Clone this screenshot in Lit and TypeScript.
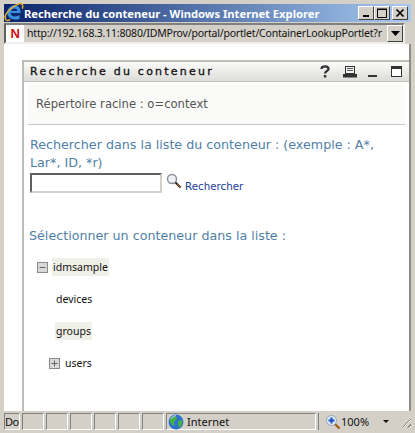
import { LitElement, html, css, svg } from "lit";
import { customElement } from "lit/decorators.js";

const ieLogo = svg`<svg width="20" height="20" viewBox="0 0 18 18"><path d="M3 10 C3 5 7 3 10 3 C13 3 15 6 15 10 L6 10 C6 13 10 14 14 12 L14 15 C9 17 3 15 3 10Z M6.500 8 L12 8 C12 5.500 7.500 5 6.500 8Z" fill="#3a8fe0" fill-rule="evenodd"/><path d="M1 14 C1 10 8 3 14 1.500 C16.500 1 17.500 3 16.500 6" fill="none" stroke="#f0b020" stroke-width="1.300"/><path d="M1.500 13 C0.500 16 2 17.500 5.500 16" fill="none" stroke="#f0b020" stroke-width="1.300"/></svg>`;
const globe = svg`<svg width="16" height="16" viewBox="0 0 16 16"><circle cx="8" cy="8" r="7.500" fill="#2f6fd0"/><path d="M3 3 L8 2 L9 5 L6 8 L7 12 L4 11 L1.500 7Z M10 7 L14.500 6 L14 11 L11 14 L10 10Z" fill="#45b04a"/><path d="M3 5 A6 6 0 0 1 8 1.500" fill="none" stroke="#b8dcf8" stroke-width="1"/></svg>`;
const mag = svg`<svg width="16" height="17" viewBox="0 0 16 17"><circle cx="6" cy="6" r="4.500" fill="#eef2f6" stroke="#8a8f96" stroke-width="1.400"/><path d="M9.500 9.500 L14.500 14.500" stroke="#3a2a1a" stroke-width="2.200"/><path d="M11 11 L14 14" stroke="#c06a20" stroke-width="0.900"/></svg>`;
const zoomIcon = svg`<svg width="16" height="16" viewBox="0 0 16 16"><path d="M10 10 L14.500 14.500" stroke="#a06020" stroke-width="2.400"/><circle cx="6.500" cy="6.500" r="5" fill="#dfe8f4" stroke="#9aa6b6"/><path d="M6.500 3.500 V9.500 M3.500 6.500 H9.500" stroke="#1550c0" stroke-width="2"/></svg>`;
const treeBox = (plus: boolean) => svg`<svg width="11" height="11" viewBox="0 0 11 11"><rect x="0.500" y="0.500" width="10" height="10" fill="#d8d8d8" stroke="#8c8c8c"/><path d="M2.500 5.500 H8.500 ${plus ? "M5.500 2.500 V8.500" : ""}" stroke="#666" stroke-width="1"/></svg>`;

@customElement("app-root")
export class AppRoot extends LitElement {
  static styles = css`
    :host { display: block; width: 415px; height: 433px; overflow: hidden; }
    * { box-sizing: border-box; }
    .win { width: 415px; height: 433px; background: #d4d0c8; padding: 4px 4px 0; display: flex; flex-direction: column; font-family: "DejaVu Sans", sans-serif; }
    .title { height: 18px; flex: none; display: flex; align-items: center; padding: 0 3px 0 0; background: linear-gradient(90deg, #0a246a, #a6caf0); color: #fff; font-family: "Noto Sans", sans-serif; font-weight: bold; font-size: 11.200px; white-space: nowrap; }
    .title span { flex: 1; }
    .logo { display: flex; margin-top: -2px; }
    .wbtns { display: flex; }
    .wbtn { width: 16px; height: 14px; background: #d4d0c8; border: 1px solid; border-color: #fff #404040 #404040 #fff; display: flex; align-items: center; justify-content: center; }
    .wbtn.gap { margin-left: 2px; }
    .addrwrap { height: 22px; flex: none; padding-top: 1px; display: flex; }
    .addr { width: 401px; height: 21px; margin-right: 6px; border: 2px solid; border-color: #808080 #f0eee8 #f0eee8 #606060; background: #fff; display: flex; align-items: center; font-family: "Noto Sans", sans-serif; font-size: 10.500px; letter-spacing: -0.200px; color: #111; white-space: nowrap; overflow: hidden; }
    .addr .n { flex: none; width: 18px; height: 17px; color: #d01010; font-weight: bold; font-size: 13px; text-align: center; line-height: 17px; font-family: "Liberation Sans", sans-serif; }
    .addr .url { flex: 1; min-width: 0; overflow: hidden; background: #d4d0c8; height: 100%; line-height: 16px; padding-left: 3px; }
    .drop { flex: none; width: 16px; height: 100%; background: #d4d0c8; border: 1px solid; border-color: #fff #404040 #404040 #fff; display: flex; align-items: center; justify-content: center; }
    .page { flex: 1; min-height: 0; background: #fff; padding-top: 16px; border-right: 2px solid #8f8c86; display: flex; }
    .portlet { margin-left: 18px; flex: 1; border: 2px solid #bdbdb8; border-right: none; border-bottom: none; }
    .phead { height: 20px; display: flex; align-items: center; padding: 0 6px; background: linear-gradient(#fbfbfa, #dcdcd8); border-bottom: 1px solid #c4c4c0; font-size: 11px; letter-spacing: 2.240px; color: #111; white-space: nowrap; }
    .phead .t { flex: 1; font-weight: normal; -webkit-text-stroke: 0.300px #111; }
    .picons { display: flex; align-items: center; letter-spacing: 0; margin-right: 1px; }
    .qm { margin-right: 13px; }
    .pr { margin-right: 11px; }
    .mn { margin-right: 14px; }
    .root { margin: 2px 4px 0; height: 41px; padding: 13px 0 0 8px; background: #fafaf8; border-bottom: 1px solid #c8c8c4; color: #555; font-size: 11.600px; white-space: nowrap; }
    .body { padding: 11px 6px 0; }
    .h { color: #5080a8; font-size: 12.700px; line-height: 18px; }
    .searchrow { display: flex; align-items: flex-start; height: 20px; margin-top: 1px; }
    .inp { width: 132px; height: 20px; border: 2px solid; border-color: #606060 #d4d0c8 #d4d0c8 #606060; background: #fff; }
    .mag { margin-left: 4px; display: flex; }
    .link { color: #1a3c9c; font-size: 10.300px; margin-left: 3px; margin-top: 7px; }
    .sel { margin-top: 34px; margin-left: -1px; }
    .tree { margin-top: 6px; font-family: "Noto Sans", sans-serif; font-size: 10.500px; color: #111; display: flex; flex-direction: column; }
    .row { height: 32px; display: flex; align-items: center; }
    .lbl { padding: 0 1px; height: 18px; line-height: 18px; }
    .hl { background: #f0efe8; }
    .r1 { padding-left: 7px; gap: 4px; }
    .r2 { padding-left: 25px; }
    .r3 { padding-left: 19px; gap: 4px; }
    .status { height: 22px; flex: none; display: flex; align-items: flex-start; gap: 2px; font-family: "Noto Sans", sans-serif; font-size: 11px; color: #111; padding-top: 2px; }
    .cell { height: 17px; border: 1px solid; border-color: #808080 #fff #fff #808080; flex: none; display: flex; align-items: center; white-space: nowrap; }
    .c1 { width: 16px; letter-spacing: -0.500px; margin-right: 0; }
    .c2 { width: 22px; }
    .net { width: 150px; gap: 3px; padding-left: 1px; }
    .zoomc { flex: 1; padding-left: 6px; border-right: none; border-bottom: none; border-top: none; }
    .arr { margin-left: 14px; width: 0; height: 0; border: 3px solid transparent; border-top: 3px solid #111; border-bottom: 0; }
    .grip { margin-left: auto; width: 12px; height: 12px; background: repeating-linear-gradient(135deg, #d4d0c8 0 2px, #808080 2px 3px, #fff 3px 4px); clip-path: polygon(100% 0, 100% 100%, 0 100%); }
  `;

  render() {
    return html`<div class="win">
      <div class="title">
        <div class="logo">${ieLogo}</div>
        <span>Recherche du conteneur - Windows Internet Explorer</span>
        <div class="wbtns">
          <div class="wbtn"><svg width="10" height="10"><rect x="2" y="7" width="6" height="2" fill="#000"/></svg></div>
          <div class="wbtn"><svg width="10" height="10"><path d="M0.500 1.500 H9.500 V9.500 H0.500Z M0 1 H10" fill="none" stroke="#000"/></svg></div>
          <div class="wbtn gap"><svg width="10" height="10"><path d="M1.500 1.500 L8.500 8.500 M8.500 1.500 L1.500 8.500" stroke="#000" stroke-width="1.700"/></svg></div>
        </div>
      </div>
      <div class="addrwrap">
        <div class="addr">
          <div class="n">N</div>
          <div class="url">http://192.168.3.11:8080/IDMProv/portal/portlet/ContainerLookupPortlet?r</div>
          <div class="drop"><svg width="9" height="5"><path d="M0 0 H9 L4.500 5Z" fill="#000"/></svg></div>
        </div>
      </div>
      <div class="page">
        <div class="portlet">
          <div class="phead">
            <div class="t">Recherche du conteneur</div>
            <div class="picons">
              <svg class="qm" width="10" height="13" viewBox="0 0 10 13"><path d="M1.500 4 C1.500 0.500 8.500 0.500 8.500 4 C8.500 6 5 6 5 8.500" fill="none" stroke="#333" stroke-width="2.200"/><rect x="3.800" y="10" width="2.500" height="2.500" fill="#333"/></svg>
              <svg class="pr" width="14" height="12" viewBox="0 0 14 12"><rect x="2.500" y="0.500" width="9" height="7" fill="#f4f4f2" stroke="#333"/><path d="M4 2.500 H10 M4 4.500 H10" stroke="#555"/><rect x="0" y="8" width="14" height="3.500" fill="#333"/></svg>
              <svg class="mn" width="9" height="12" viewBox="0 0 9 12"><rect x="0" y="9" width="9" height="2" fill="#333"/></svg>
              <svg width="11" height="11" viewBox="0 0 11 11"><rect x="0.500" y="0.500" width="10" height="10" fill="#fff" stroke="#333"/><rect x="0" y="0" width="11" height="3" fill="#333"/></svg>
            </div>
          </div>
          <div class="root">Répertoire racine : o=context</div>
          <div class="body">
            <div class="h">Rechercher dans la liste du conteneur : (exemple : A*, Lar*, ID, *r)</div>
            <div class="searchrow">
              <div class="inp"></div>
              <div class="mag">${mag}</div>
              <div class="link">Rechercher</div>
            </div>
            <div class="h sel">Sélectionner un conteneur dans la liste :</div>
            <div class="tree">
              <div class="row r1">${treeBox(false)}<div class="lbl hl">idmsample</div></div>
              <div class="row r2"><div class="lbl">devices</div></div>
              <div class="row r2"><div class="lbl hl">groups</div></div>
              <div class="row r3">${treeBox(true)}<div class="lbl">users</div></div>
            </div>
          </div>
        </div>
      </div>
      <div class="status">
        <div class="cell c1">Do</div>
        <div class="cell c2"></div><div class="cell c2"></div><div class="cell c2"></div><div class="cell c2"></div><div class="cell c2"></div><div class="cell c2"></div>
        <div class="cell net">${globe}<span>Internet</span></div>
        <div class="cell zoomc">${zoomIcon}<span>100%</span><div class="arr"></div><div class="grip"></div></div>
      </div>
    </div>`;
  }
}
